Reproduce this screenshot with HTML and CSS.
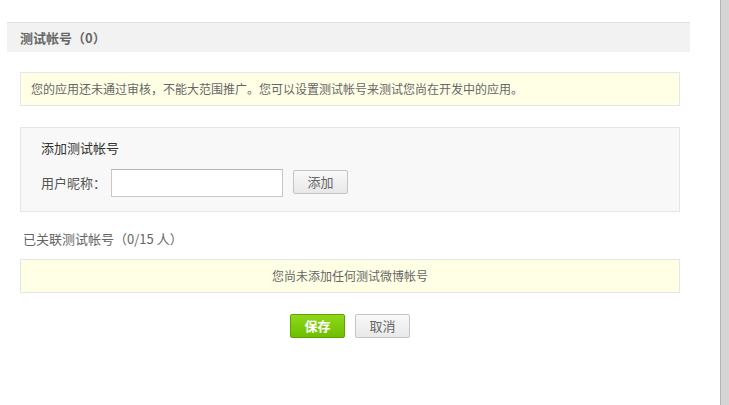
FILE: index.html
```html
<!DOCTYPE html>
<html lang="zh-CN">
<head>
<meta charset="utf-8">
<title>测试帐号</title>
<link rel="stylesheet" href="styles.css">
</head>
<body>
<div class="layout">
  <div class="page">
    <div class="title">测试帐号（0）</div>
    <div class="content">
      <div class="notice">您的应用还未通过审核，不能大范围推广。您可以设置测试帐号来测试您尚在开发中的应用。</div>
      <div class="addbox">
        <div class="addbox-title">添加测试帐号</div>
        <div class="addbox-row">
          <span class="label">用户昵称：</span>
          <input class="text-input" type="text">
          <button class="btn btn-gray btn-add">添加</button>
        </div>
      </div>
      <div class="linked">已关联测试帐号（0/15 人）</div>
      <div class="empty">您尚未添加任何测试微博帐号</div>
      <div class="actions">
        <button class="btn btn-green">保存</button>
        <button class="btn btn-gray">取消</button>
      </div>
    </div>
  </div>
  <div class="edge"></div>
</div>
</body>
</html>
```
FILE: styles.css
```css
* { box-sizing: border-box; }
html, body { margin: 0; padding: 0; background: #fff; }
body {
  font-family: "Noto Sans CJK SC", "Liberation Sans", sans-serif;
  font-size: 12px;
  color: #666;
}
.layout { display: flex; height: 405px; }
.page { flex: 1; padding: 22px 30px 0 7px; }
.edge {
  width: 9px;
  height: 405px;
  background: #d5d5d5;
  border-left: 1px solid #b3b3b3;
}
.title {
  border-top: 1px solid #e2e2e2;
  background: #f2f2f2;
  height: 30px;
  line-height: 29px;
  padding-left: 13px;
  font-size: 13px;
  font-weight: bold;
  color: #666;
}
.content { padding: 0 10px 0 13px; }
.notice {
  margin-top: 20px;
  height: 34px;
  line-height: 32px;
  padding-left: 10px;
  border: 1px solid #e6e6e6;
  background: #ffffe6;
  font-size: 12px;
  color: #666;
}
.addbox {
  margin-top: 21px;
  height: 85px;
  border: 1px solid #e6e6e6;
  background: #f8f8f8;
  padding: 10px 20px 0 20px;
}
.addbox-title { font-size: 13px; line-height: 20px; color: #333; }
.addbox-row {
  margin-top: 11px;
  display: flex;
  align-items: flex-start;
  height: 28px;
}
.label { font-size: 13px; line-height: 28px; color: #555; width: 70px; }
.text-input {
  width: 172px;
  height: 28px;
  border: 1px solid #c8c8c8;
  border-top-color: #b8b8b8;
  background: #fff;
  margin: 0;
  padding: 0 4px;
  outline: none;
}
.btn {
  font-family: "Noto Sans CJK SC", "Liberation Sans", sans-serif;
  font-size: 13px;
  width: 55px;
  height: 24px;
  line-height: 20px;
  padding: 0;
  border-radius: 2px;
  cursor: pointer;
}
.btn-gray {
  border: 1px solid #c4c4c4;
  background: linear-gradient(#f9f9f9, #e8e8e8);
  color: #666;
}
.btn-add { margin-left: 10px; margin-top: 1px; }
.btn-green {
  border: 1px solid #5da400;
  background: linear-gradient(#8fd81c, #6ebf00);
  color: #fff;
  font-weight: bold;
}
.linked {
  margin-top: 17px;
  padding-left: 3px;
  line-height: 20px;
  font-size: 13px;
  color: #666;
}
.empty {
  margin-top: 10px;
  height: 34px;
  line-height: 32px;
  text-align: center;
  border: 1px solid #e6e6e6;
  background: #ffffe6;
  font-size: 12px;
  color: #666;
}
.actions {
  margin-top: 21px;
  display: flex;
  justify-content: center;
  gap: 10px;
}
```
